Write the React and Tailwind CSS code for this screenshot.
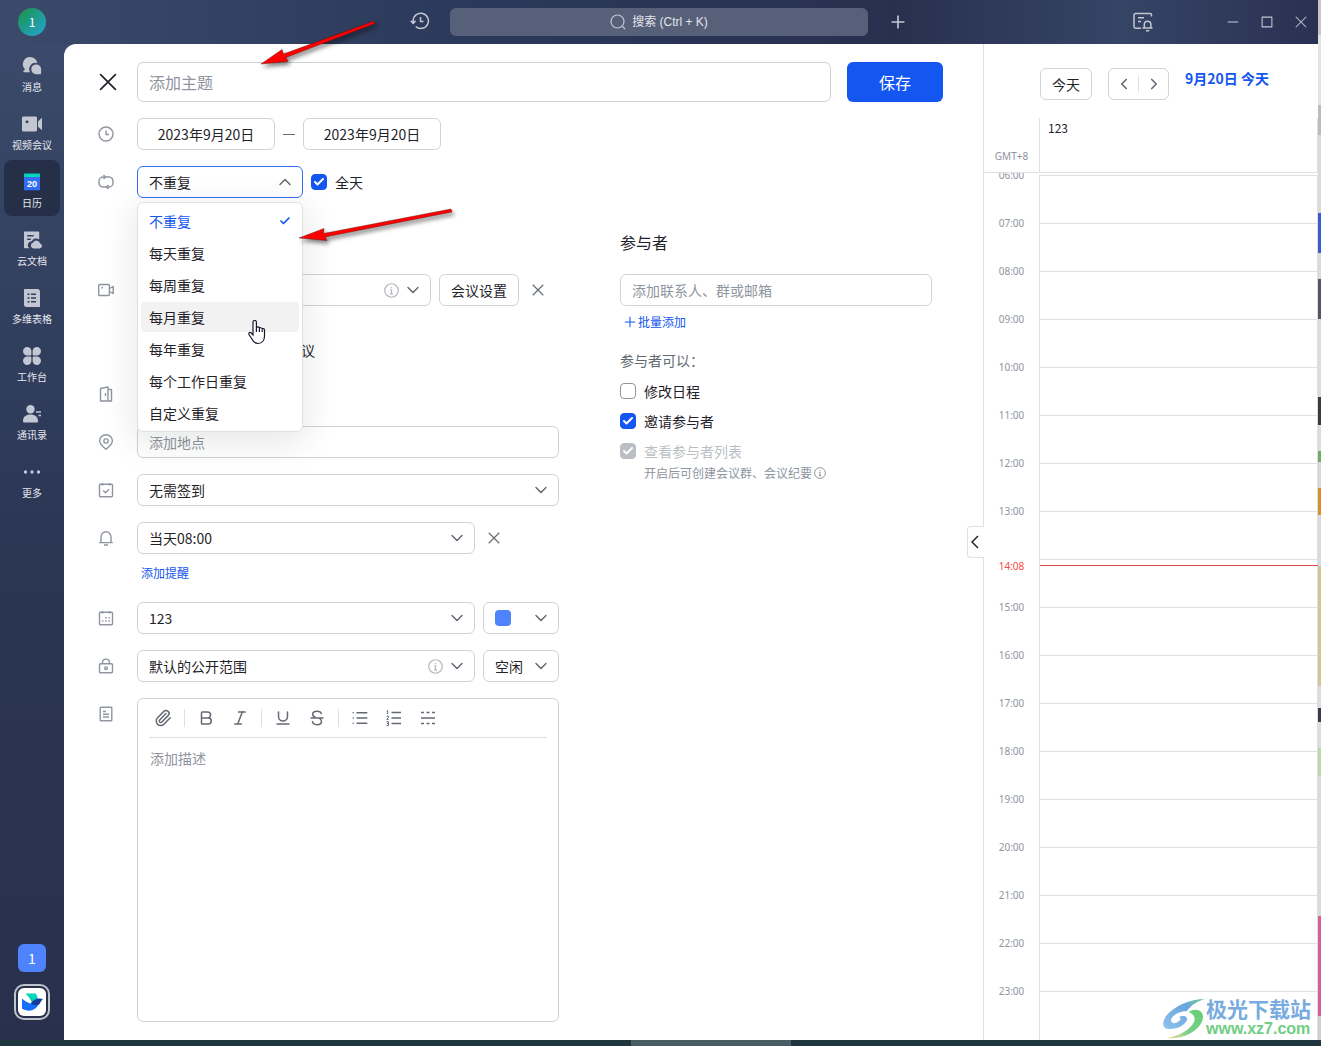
import { Bold, Check, ChevronDown, ChevronLeft, ChevronRight, ChevronUp, Italic, List, Paperclip, Plus, Underline } from 'lucide-react';

const REPEAT_OPTIONS = ['不重复', '每天重复', '每周重复', '每月重复', '每年重复', '每个工作日重复', '自定义重复'];
const HOURS = ['06:00', '07:00', '08:00', '09:00', '10:00', '11:00', '12:00', '13:00', '14:00', '15:00', '16:00', '17:00', '18:00', '19:00', '20:00', '21:00', '22:00', '23:00'];

// Sliver of the desktop that shows beside the window
const DESKTOP_STRIPS = [
  'h-[35px] bg-[#c9c6ca]',
  'h-[70px] bg-[#e4e4e4]',
  'h-[30px] bg-[#bcbcbe]',
  'h-[78px] bg-[#dadadb]',
  'h-[40px] bg-[#3d5bcc]',
  'h-[26px] bg-[#dadadb]',
  'h-[40px] bg-[#54565f]',
  'h-[78px] bg-[#dcdcdc]',
  'h-[28px] bg-[#3a3a3a]',
  'h-[26px] bg-[#dcdcdc]',
  'h-[11px] bg-[#6fae5e]',
  'h-[26px] bg-[#d8d8d8]',
  'h-[27px] bg-[#d98f2e]',
  'h-[51px] bg-[#dadadb]',
  'h-[120px] bg-[#cfc79c]',
  'h-[22px] bg-[#dcdcdc]',
  'h-[14px] bg-[#3a3a4a]',
  'h-[26px] bg-[#dcdcdc]',
  'h-[28px] bg-[#bcd6b0]',
  'h-[140px] bg-[#dadadb]',
  'h-[100px] bg-[#d95f92]',
];

/* ── Icons ── */

function Line({ size = 16, box = 16, width = 1.4, className = '', children }) {
  return (
    <svg
      width={size}
      height={size}
      viewBox={`0 0 ${box} ${box}`}
      fill="none"
      stroke="currentColor"
      strokeWidth={width}
      strokeLinejoin="round"
      className={`shrink-0 ${className}`}
      aria-hidden="true"
    >
      {children}
    </svg>
  );
}

function Cross({ size, width }) {
  return (
    <Line size={size} width={width}>
      <path d="M1 1l14 14M15 1L1 15" />
    </Line>
  );
}

function InfoIcon({ size = 15 }) {
  return (
    <Line size={size} width={1.3}>
      <circle cx="8" cy="8" r="7.2" />
      <path d="M8 4.2v1.4M6.6 7.2H8v4M6.3 11.5h3.4" />
    </Line>
  );
}

const ClockIcon = () => (
  <Line>
    <circle cx="8" cy="8" r="7" />
    <path d="M8 4.6v3.9h3" />
  </Line>
);

const RepeatIcon = () => (
  <Line>
    <path d="M7.5 3H5a4 4 0 0 0-4 4v2a4 4 0 0 0 2.800 3.800M8.500 13H11a4 4 0 0 0 4-4V7a4 4 0 0 0-2.800-3.800" />
    <path d="M5.500 1l2 2-2 2M7.500 3h3.500a4 4 0 0 1 1.200.2M10.500 15l-2-2 2-2M8.500 13H5a4 4 0 0 1-1.200-.2" />
  </Line>
);

const VideoIcon = () => (
  <Line>
    <rect x=".7" y="2.5" width="10.7" height="11" rx="1" />
    <path d="M11.4 6.5l3.8-2v7l-3.8-2" />
    <path d="M3.400 5.600H5" strokeWidth="1.6" />
  </Line>
);

const RoomIcon = () => (
  <Line>
    <path d="M2.5 2.500L10 1v14H2.500zM10 3.500h3.500V15H10M7.500 7v3" />
  </Line>
);

const PinIcon = () => (
  <Line>
    <path d="M8 15.300C4 12 1.600 9.700 1.600 6.900a6.400 6.200 0 0 1 12.800 0C14.400 9.700 12 12 8 15.300z" />
    <rect x="5.9" y="4.9" width="4.2" height="4.2" rx="1.8" />
  </Line>
);

const SignInIcon = () => (
  <Line>
    <rect x="1.5" y="2.2" width="13" height="12.5" rx="1" />
    <path d="M4.500 1v2.400M11.500 1v2.400M5.200 8.500l2.300 2.200 3.600-3.500" />
  </Line>
);

const BellIcon = () => (
  <Line>
    <path d="M3 12.500V7a5 5.200 0 0 1 10 0v5.500M1.200 12.600h13.600M6 15h4" />
  </Line>
);

const CalendarIcon = () => (
  <Line>
    <rect x="1.5" y="2.2" width="13" height="12.5" rx="1" />
    <path d="M4.500 1v2.400M11.500 1v2.400" />
    <path d="M7.300 7.800h1.400M10.600 7.800H12M4 11h1.400M7.300 11h1.400M10.600 11H12" strokeWidth="1.6" />
  </Line>
);

const LockIcon = () => (
  <Line>
    <rect x="1.5" y="5.7" width="13" height="9" rx="1" />
    <path d="M4.600 5.700V4.500a3.400 3.400 0 0 1 6.800 0v1.200" />
    <circle cx="8" cy="10.2" r="1.3" />
  </Line>
);

const NoteIcon = () => (
  <Line>
    <rect x="2.2" y="1.2" width="11.6" height="13.6" rx=".6" />
    <path d="M5 5.500h3M5 8.200h6M5 11h6" />
  </Line>
);

const StrikeIcon = () => (
  <Line size={18} box={18} width={1.5}>
    <path d="M13.500 5.200C13 3 11.200 2.300 9 2.300c-2.300 0-4.300 1-4.300 3 0 1.500 1.200 2.500 2.600 3M2.500 9h13M4.400 12c.2 2.500 2.100 3.700 4.600 3.700s4.500-1 4.500-3.200c0-1.400-.8-2.500-2-3.200" />
  </Line>
);

const OrderedIcon = () => (
  <Line size={18} box={18} width={1.5}>
    <path d="M6.500 3.500h9.500M6.500 9h9.500M6.500 14.500h9.500" />
    <path d="M1.700 2.200l1-.6v3.600M1.500 7.300h2v1.300l-1.800 1.700h2M1.500 12.700h2v3.800h-2M2 14.500h1.500" strokeWidth="1" />
  </Line>
);

const DividerIcon = () => (
  <Line size={18} box={18} width={1.5}>
    <path d="M2 3.500h3M7.500 3.500h3M13 3.500h3M2 9h14M2 14.500h3M7.500 14.500h3M13 14.500h3" />
  </Line>
);

function Solid({ children }) {
  return (
    <svg width="20" height="20" viewBox="0 0 20 20" fill="#c3c7d2" aria-hidden="true">
      {children}
    </svg>
  );
}

const NAV_ITEMS = [
  {
    label: '消息',
    icon: (
      <Solid>
        <path d="M8.200 1a7.200 7.200 0 0 1 7.100 6.200A6.200 6.200 0 0 0 8 16.200H1.800c-.6 0-.8-.6-.4-1l1.600-1.900A7.200 7.200 0 0 1 8.200 1z" />
        <path d="M14.200 8.400a4.900 4.900 0 0 1 4.900 4.900v4.100c0 .5-.3.800-.8.800h-4.100a4.900 4.900 0 0 1 0-9.800z" />
      </Solid>
    ),
  },
  {
    label: '视频会议',
    icon: (
      <Solid>
        <path
          fillRule="evenodd"
          d="M1.500 2.500h12c.8 0 1.500.7 1.500 1.500v12c0 .8-.7 1.500-1.500 1.500h-12C.7 17.500 0 16.800 0 16V4c0-.8.7-1.500 1.500-1.500zM5 6.200a1.500 1.500 0 1 0 0 3 1.500 1.500 0 0 0 0-3z"
        />
        <path d="M16 7.500l3-3c.5-.4 1-.2 1 .4v10.200c0 .6-.5.8-1 .4l-3-3z" />
      </Solid>
    ),
  },
  {
    label: '日历',
    active: true,
    icon: (
      <svg width="20" height="20" viewBox="0 0 20 20" aria-hidden="true">
        <path d="M2 5h16v12.500c0 .5-.3.800-.8.800H2.800c-.5 0-.8-.3-.8-.8z" fill="#336df4" />
        <path d="M2.800 1.500h14.400c.5 0 .8.300.8.800V5H2V2.300c0-.5.3-.8.800-.8z" fill="#00d6b9" />
        <text x="10" y="14.5" fontSize="9" fontWeight="700" textAnchor="middle" fill="#fff" fontFamily="Liberation Sans, sans-serif">
          20
        </text>
      </svg>
    ),
  },
  {
    label: '云文档',
    icon: (
      <Solid>
        <path
          fillRule="evenodd"
          d="M3 1.500h13.200c.6 0 1 .4 1 1v7a5 5 0 0 0-7.600 1.700 3.800 3.800 0 0 0-2 7H3c-.6 0-1-.4-1-1V2.500c0-.6.4-1 1-1zM5.200 5v1.600h6.500V5zm0 3.400V10h3.600V8.400z"
        />
        <path d="M11.500 18.500a3 3 0 0 1-.3-5.900 3.700 3.700 0 0 1 6.900 1 2.500 2.500 0 0 1-.4 4.900z" />
      </Solid>
    ),
  },
  {
    label: '多维表格',
    icon: (
      <Solid>
        <path d="M2 2c0-.6.400-1 1-1h12.500c1.400 0 2.500 1.100 2.500 2.500V18c0 .6-.4 1-1 1H4.500A2.500 2.500 0 0 1 2 16.500z" />
        <path d="M5.500 6.300h2M9 6.300h5M5.500 10h2M9 10h5M5.500 13.700h2M9 13.700h5" stroke="#323e5e" strokeWidth="1.6" />
      </Solid>
    ),
  },
  {
    label: '工作台',
    icon: (
      <Solid>
        <path d="M5.200 1a4.200 4.200 0 0 1 4.200 4.200v2.900c0 .8-.5 1.300-1.300 1.300H5.200a4.200 4.200 0 0 1 0-8.400zM14.800 1a4.200 4.200 0 0 0-4.200 4.200v2.900c0 .8.500 1.300 1.300 1.300h2.900a4.200 4.200 0 0 0 0-8.400zM5.200 19a4.200 4.200 0 0 0 4.200-4.200v-2.900c0-.8-.5-1.300-1.300-1.300H5.200a4.200 4.200 0 0 0 0 8.400zM14.800 19a4.200 4.200 0 0 1-4.200-4.200v-2.900c0-.8.500-1.300 1.300-1.300h2.900a4.200 4.200 0 0 1 0 8.400z" />
      </Solid>
    ),
  },
  {
    label: '通讯录',
    icon: (
      <Solid>
        <circle cx="8.5" cy="5.2" r="4.2" />
        <path d="M8.500 10.600c4.500 0 7.500 2.400 7.500 6.400 0 .9-.5 1.600-1.500 1.600H2.500C1.500 18.600 1 17.900 1 17c0-4 3-6.400 7.500-6.400zM14 7.200h5v1.500h-5zM16.500 10.800H19v1.500h-2.500z" />
      </Solid>
    ),
  },
  {
    label: '更多',
    icon: (
      <Solid>
        <circle cx="3.5" cy="10" r="1.7" />
        <circle cx="10" cy="10" r="1.7" />
        <circle cx="16.5" cy="10" r="1.7" />
      </Solid>
    ),
  },
];

/* ── Form controls ── */

function SelectBox({ label, value, open = false, info = false, swatch = false, className = '' }) {
  return (
    <div className={`relative ${className}`}>
      <select
        aria-label={label}
        className={`w-full h-8 pl-[11px] pr-8 rounded-md border bg-white text-sm appearance-none outline-none ${
          open ? 'border-[#336df4]' : 'border-[#d0d3d6]'
        }`}
      >
        <option>{value}</option>
      </select>
      <span className="absolute inset-y-0 right-2 flex items-center gap-1 text-[#646a73] pointer-events-none">
        {info && (
          <span className="text-[#b4b8be]">
            <InfoIcon />
          </span>
        )}
        {open ? <ChevronUp size={20} strokeWidth={1.8} /> : <ChevronDown size={20} strokeWidth={1.8} />}
      </span>
      {swatch && <span className="absolute top-2 left-3 w-4 h-4 rounded bg-[#4e83fd] pointer-events-none" />}
    </div>
  );
}

function CheckItem({ id, label, checked = false, disabled = false }) {
  const box = disabled
    ? 'bg-[#bbbfc4] border-[#bbbfc4]'
    : checked
    ? 'bg-[#1456f0] border-[#1456f0]'
    : 'bg-white border-[#8f959e]';
  return (
    <div className="flex items-center gap-2 h-5">
      <span className="relative flex">
        <input
          id={id}
          type="checkbox"
          defaultChecked={checked}
          disabled={disabled}
          className={`w-4 h-4 rounded border appearance-none ${box}`}
        />
        {checked && (
          <Check size={12} strokeWidth={4} className="absolute top-0.5 left-0.5 text-white pointer-events-none" />
        )}
      </span>
      <label htmlFor={id} className={disabled ? 'text-[#bbbfc4]' : ''}>
        {label}
      </label>
    </div>
  );
}

function FormRow({ icon, className = '', children }) {
  return (
    <div className={`flex ${className}`}>
      <span className="w-[73px] h-8 pl-[34px] shrink-0 flex items-center text-[#8f959e]">{icon}</span>
      <div className="flex-1 min-w-0">{children}</div>
    </div>
  );
}

function DateInput({ label }) {
  return (
    <input
      type="text"
      aria-label={label}
      defaultValue="2023年9月20日"
      className="w-[138px] h-8 rounded-md border border-[#d0d3d6] text-center outline-none"
    />
  );
}

function ToolButton({ label, children }) {
  return (
    <button type="button" aria-label={label} className="w-[34px] h-6 flex items-center justify-center">
      {children}
    </button>
  );
}

function RepeatMenu() {
  return (
    <ul
      role="listbox"
      aria-label="重复"
      className="absolute z-10 top-full left-0 mt-1 w-[166px] flex flex-col gap-[2px] p-[3px] bg-white border border-[#dee0e3] rounded-md shadow-[0_8px_32px_4px_rgba(31,35,41,0.10)]"
    >
      {REPEAT_OPTIONS.map((option, i) => (
        <li
          key={option}
          role="option"
          aria-selected={i === 0}
          className={`h-[30px] px-2 rounded flex items-center justify-between ${i === 0 ? 'text-[#1456f0]' : ''} ${
            i === 3 ? 'bg-[#f2f2f3]' : ''
          }`}
        >
          {option}
          {i === 0 && <Check size={12} strokeWidth={3.5} />}
        </li>
      ))}
    </ul>
  );
}

/* ── Page sections ── */

function TopBar() {
  return (
    <header className="h-11 grid grid-cols-[1fr_418px_1fr] items-center text-[#c3c7d2] bg-[linear-gradient(to_right,#3b4a6b,#2b395a_35%,#28304f_68%,#364465_85%,#2a3153)]">
      <div className="flex items-center justify-between pl-[18px] pr-5">
        <span className="w-7 h-7 rounded-full flex items-center justify-center text-xs text-white bg-linear-to-br from-[#22903a] to-[#2aa3d8]">
          1
        </span>
        <button type="button" aria-label="历史记录">
          <Line size={20} box={20} width={1.5}>
            <path d="M3.200 12.500V9.500a7.600 7.600 0 1 1 2.500 6M.8 9.800l2.400 2.600 2.300-2.600M10.500 6v4.500h3" transform="translate(0 -1)" />
          </Line>
        </button>
      </div>
      <button
        type="button"
        className="h-7 rounded-md bg-[#566079] flex items-center justify-center gap-1.5 text-xs text-[#e3e5ea] font-['Liberation_Sans','Noto_Sans_CJK_SC',sans-serif]"
      >
        <Line size={16} width={1.2} className="text-[#c3c7d2]">
          <circle cx="7.5" cy="7.5" r="6.5" />
          <path d="M12.200 12.200l2.800 2.800" />
        </Line>
        搜索 (Ctrl + K)
      </button>
      <div className="flex items-center pl-5 pr-[11px]">
        <button type="button" aria-label="新建">
          <Plus size={20} strokeWidth={2} />
        </button>
        <button type="button" aria-label="通知" className="ml-auto mr-[74px]">
          <Line size={20} box={20} width={1.5}>
            <path d="M18.500 4.500V3c0-.8-.6-1.400-1.400-1.400H2.400C1.600 1.600 1 2.200 1 3v11.800c0 .8.600 1.400 1.400 1.400H8M5 5.800h6M5 9.500h3" />
            <path d="M11.300 15.800v-3.300a3.300 3.300 0 0 1 6.600 0v3.300M9.500 16h10M13 18.700h3.200" />
          </Line>
        </button>
        <div className="flex gap-[22px]">
          <button type="button" aria-label="最小化">
            <Line size={12}>
              <path d="M1 8h14" />
            </Line>
          </button>
          <button type="button" aria-label="最大化">
            <Line size={12}>
              <path d="M1.500 1.500h13v13h-13z" />
            </Line>
          </button>
          <button type="button" aria-label="关闭">
            <Cross size={12} width={1.4} />
          </button>
        </div>
      </div>
    </header>
  );
}

function Sidebar() {
  return (
    <aside className="w-16 shrink-0 flex flex-col justify-between pb-5 bg-linear-to-b from-[#3b4a6a] via-[#2b3655] via-50% to-[#28304d]">
      <nav className="flex flex-col gap-[2px] px-1">
        {NAV_ITEMS.map((item) => (
          <a
            key={item.label}
            href="#"
            className={`h-14 pt-3 rounded-lg flex flex-col items-center gap-1 text-[10px] leading-[14px] text-[#e6e8ee] ${
              item.active ? 'bg-[#252f48]' : ''
            }`}
          >
            {item.icon}
            {item.label}
          </a>
        ))}
      </nav>
      <div className="flex flex-col items-center gap-3 text-white">
        <span className="w-7 h-7 rounded-md flex items-center justify-center bg-[#4e83fd]">1</span>
        <button
          type="button"
          aria-label="飞书"
          className="w-9 h-9 rounded-[10px] border-2 border-[#bfc3cc] flex items-center justify-center"
        >
          <svg width="28" height="28" viewBox="0 0 28 28" aria-hidden="true">
            <rect width="28" height="28" rx="6" fill="#fff" />
            <path d="M7.500 5.500h10c1.200 1.400 2 3 2.300 4.900-2 .7-3.800 2.600-5.600 4.600C12.700 11.500 10.500 8.200 7.500 5.500z" fill="#00d6b9" />
            <path d="M4 10.500c3.500 3.300 8 5.600 12.400 5.600 2 0 4-.6 5.400-2-1.900 5.400-5.700 8.600-10.700 8.600-2.700 0-5.300-.7-7.100-2.100z" fill="#146fff" />
            <path d="M12.500 15.500c2.700-3.400 5.500-5 8.800-5 1.300 0 2.600.2 3.700.6-1.500 1.200-2.100 2.600-3 4.100-2.200 3-6.300 2.100-9.500.3z" fill="#133c9a" />
          </svg>
        </button>
      </div>
    </aside>
  );
}

function EventForm() {
  return (
    <div className="flex flex-col">
      <FormRow icon={<ClockIcon />} className="mb-4">
        <div className="flex items-center">
          <DateInput label="开始日期" />
          <span className="w-3 h-px mx-2 bg-[#646a73]" />
          <DateInput label="结束日期" />
        </div>
      </FormRow>
      <FormRow icon={<RepeatIcon />} className="mb-[76px]">
        <div className="flex items-center gap-2">
          <div className="relative">
            <SelectBox label="重复" value="不重复" open className="w-[166px]" />
            <RepeatMenu />
          </div>
          <CheckItem id="all-day" label="全天" checked />
        </div>
      </FormRow>
      <FormRow icon={<VideoIcon />} className="mb-4">
        <div className="flex items-center gap-2">
          <SelectBox label="视频会议" value="" info className="flex-1" />
          <button type="button" className="w-20 h-8 rounded-md border border-[#d0d3d6]">
            会议设置
          </button>
          <button type="button" aria-label="移除视频会议" className="w-8 h-8 pl-[5px] flex items-center text-[#646a73]">
            <Cross size={12} width={1.6} />
          </button>
        </div>
        <p className="h-14 pl-[164px] pb-0.5 flex items-end leading-5">议</p>
      </FormRow>
      <FormRow icon={<RoomIcon />} className="mb-4" />
      <FormRow icon={<PinIcon />} className="mb-4">
        <input
          type="text"
          aria-label="地点"
          placeholder="添加地点"
          className="w-full h-8 px-[11px] rounded-md border border-[#d0d3d6] placeholder:text-[#8f959e] outline-none"
        />
      </FormRow>
      <FormRow icon={<SignInIcon />} className="mb-4">
        <SelectBox label="签到" value="无需签到" />
      </FormRow>
      <FormRow icon={<BellIcon />} className="mb-4">
        <div className="flex items-center gap-2">
          <SelectBox label="提醒" value="当天08:00" className="flex-1" />
          <button type="button" aria-label="移除提醒" className="w-[76px] h-8 pl-[5px] flex items-center text-[#646a73]">
            <Cross size={12} width={1.6} />
          </button>
        </div>
        <a href="#" className="block mt-2 mb-0.5 pl-1 h-[22px] text-xs leading-[22px] text-[#1456f0]">
          添加提醒
        </a>
      </FormRow>
      <FormRow icon={<CalendarIcon />} className="mb-4">
        <div className="flex gap-2">
          <SelectBox label="日历" value="123" className="flex-1" />
          <SelectBox label="颜色" value="" swatch className="w-[76px]" />
        </div>
      </FormRow>
      <FormRow icon={<LockIcon />} className="mb-4">
        <div className="flex gap-2">
          <SelectBox label="公开范围" value="默认的公开范围" info className="flex-1" />
          <SelectBox label="忙闲状态" value="空闲" className="w-[76px]" />
        </div>
      </FormRow>
      <FormRow icon={<NoteIcon />} className="flex-1">
        <div className="h-full min-h-[324px] flex flex-col rounded-md border border-[#d0d3d6]">
          <div className="h-[38px] pl-2 flex items-center text-[#646a73]">
            <ToolButton label="附件"><Paperclip size={18} /></ToolButton>
            <span className="w-px h-[18px] mx-1 bg-[#dee0e3]" />
            <ToolButton label="加粗"><Bold size={18} /></ToolButton>
            <ToolButton label="斜体"><Italic size={18} /></ToolButton>
            <span className="w-px h-[18px] mx-1 bg-[#dee0e3]" />
            <ToolButton label="下划线"><Underline size={18} /></ToolButton>
            <ToolButton label="删除线"><StrikeIcon /></ToolButton>
            <span className="w-px h-[18px] mx-1 bg-[#dee0e3]" />
            <ToolButton label="无序列表"><List size={18} /></ToolButton>
            <ToolButton label="有序列表"><OrderedIcon /></ToolButton>
            <ToolButton label="分割线"><DividerIcon /></ToolButton>
          </div>
          <div className="mx-[11px] h-px bg-[#dee0e3]" />
          <textarea
            aria-label="描述"
            placeholder="添加描述"
            className="flex-1 px-3 py-2 leading-6 resize-none outline-none placeholder:text-[#8f959e]"
          />
        </div>
      </FormRow>
    </div>
  );
}

function Participants() {
  return (
    <section className="w-[312px] shrink-0 pt-28">
      <h2 className="text-base leading-6">参与者</h2>
      <input
        type="text"
        aria-label="参与者"
        placeholder="添加联系人、群或邮箱"
        className="mt-5 w-full h-8 px-[11px] rounded-md border border-[#d0d3d6] placeholder:text-[#8f959e] outline-none"
      />
      <button type="button" className="mt-1.5 pl-1 h-5 flex items-center gap-0.5 text-xs text-[#1456f0]">
        <Line size={12}>
          <path d="M8 1v14M1 8h14" />
        </Line>
        批量添加
      </button>
      <p className="mt-[18px] leading-5 text-[#646a73]">参与者可以：</p>
      <div className="mt-[11px] flex flex-col gap-2.5">
        <CheckItem id="can-edit" label="修改日程" />
        <CheckItem id="can-invite" label="邀请参与者" checked />
        <CheckItem id="can-view" label="查看参与者列表" checked disabled />
      </div>
      <p className="mt-0.5 pl-6 flex items-center gap-0.5 text-xs leading-5 text-[#8f959e]">
        开启后可创建会议群、会议纪要
        <InfoIcon size={12} />
      </p>
    </section>
  );
}

function DayPanel() {
  return (
    <aside className="relative w-[335px] shrink-0 flex flex-col border-l border-[#dee0e3]">
      <button
        type="button"
        aria-label="收起"
        className="absolute top-1/2 -left-[17px] -translate-y-1/2 w-[17px] h-8 pr-0.5 rounded-l border border-r-0 border-[#dee0e3] bg-white flex items-center justify-center"
      >
        <svg width="8" height="14" viewBox="0 0 8 14" fill="none" stroke="#1f2329" strokeWidth="1.5" aria-hidden="true">
          <path d="M7 1L1 7l6 6" />
        </svg>
      </button>
      <div className="h-[74px] pt-6 pl-14 flex items-start gap-4">
        <button type="button" className="w-[52px] h-8 rounded-md border border-[#d0d3d6]">
          今天
        </button>
        <div className="w-[61px] h-8 flex items-center rounded-md border border-[#d0d3d6] text-[#646a73]">
          <button type="button" aria-label="前一天" className="flex-1 flex justify-center">
            <ChevronLeft size={18} strokeWidth={2.2} />
          </button>
          <span className="w-px h-[18px] bg-[#dee0e3]" />
          <button type="button" aria-label="后一天" className="flex-1 flex justify-center">
            <ChevronRight size={18} strokeWidth={2.2} />
          </button>
        </div>
        <h2 className="leading-5 font-bold text-[#1456f0]">9月20日 今天</h2>
      </div>
      <div className="h-[55px] flex border-b border-[#dee0e3]">
        <span className="w-[55px] pb-1.5 flex items-end justify-center text-[10px] leading-5 text-[#8f959e] font-['Noto_Sans',sans-serif]">
          GMT+8
        </span>
        <span className="flex-1 pl-2 text-xs leading-5 border-x border-[#dee0e3]">123</span>
      </div>
      <div className="flex-1 pt-[2px] overflow-hidden flex flex-col text-[10px] text-[#8f959e] font-['Noto_Sans',sans-serif]">
        {HOURS.map((hour) => {
          const isNow = hour === '14:00';
          return (
            <div key={hour} className="relative h-12 last:flex-1 flex">
              <span
                className={`w-[55px] flex items-center justify-center ${isNow ? 'h-3.5 text-[#f54a45]' : 'h-0'}`}
              >
                {isNow ? '14:08' : hour}
              </span>
              <span className="flex-1 border-t border-x border-[#dee0e3]" />
              {isNow && <span className="absolute top-1.5 left-14 right-0 h-px bg-[#e54545]" />}
            </div>
          );
        })}
      </div>
    </aside>
  );
}

/* ── Overlays ── */

function Arrows() {
  return (
    <svg
      width="480"
      height="260"
      viewBox="0 0 480 260"
      className="absolute z-20 top-0 left-0 pointer-events-none drop-shadow-[2px_3px_2px_rgba(0,0,0,0.5)]"
      aria-hidden="true"
    >
      <g stroke="#4a1010" strokeWidth=".4" fill="#fe0000">
        <path d="M261 64L282 49.500l1.500 4.500L374 21l1 2.500L286 57.500l2 4z" />
        <path d="M299 238l25-9.500-.5 5L451 209l1 3L325 237l2 3.500z" />
      </g>
    </svg>
  );
}

function HandCursor() {
  return (
    <svg
      width="18"
      height="25"
      viewBox="0 0 18 25"
      className="absolute z-20 top-[320px] left-[248px] pointer-events-none"
      aria-hidden="true"
    >
      <path
        d="M5 15V2.200a1.700 1.700 0 0 1 3.400 0V8c.2-1.500 2.800-1.500 3 .3.300-1 2.600-.8 2.800.8.300-.9 2.300-.6 2.300 1V16c0 4-2.200 7.500-6.500 7.500-3.500 0-4.800-1.900-5.900-4.300L1 14.500c-.8-1.600 1-2.700 2.100-1.700zM8.400 8v4M11.400 8.500V12M14.200 9.500V12"
        fill="#fff"
        stroke="#16162a"
        strokeWidth="1.2"
      />
    </svg>
  );
}

function Watermark() {
  return (
    <div className="absolute z-20 bottom-1.5 right-2.5 flex items-center pointer-events-none">
      <svg width="44" height="42" viewBox="0 0 44 42" aria-hidden="true">
        <defs>
          <linearGradient id="wm-a" x1="1" y1="0" x2="0" y2="1">
            <stop offset="0" stopColor="#6fcf8f" />
            <stop offset=".35" stopColor="#6aa5e0" />
            <stop offset="1" stopColor="#8fc3ee" />
          </linearGradient>
          <linearGradient id="wm-b" x1="1" y1="0" x2="0" y2="1">
            <stop offset="0" stopColor="#62cf74" />
            <stop offset=".6" stopColor="#7ccf88" />
            <stop offset="1" stopColor="#f3dc9a" />
          </linearGradient>
        </defs>
        <path
          d="M43 1C28 1 12 8 4 18c-5 8-3 13 4 13 8 0 15-4 17-9 1-4-4-5-8-3 2 1 2 3 0 4-3 3-8 3-8-1 1-5 9-9 16-9C29 7 36 3 43 1z"
          fill="url(#wm-a)"
        />
        <path d="M27 14c4-3 10-3 13 1 3 5-1 13-8 18-7 5-16 8-27 7 12-2 23-8 27-16 2-5-1-8-5-10z" fill="url(#wm-b)" />
      </svg>
      <div className="font-bold">
        <p className="text-[21px] leading-5 text-[#78acdf]">极光下载站</p>
        <p className="text-base leading-[22px] text-[#6fce83] font-['Liberation_Sans',sans-serif]">www.xz7.com</p>
      </div>
    </div>
  );
}

export default function App() {
  return (
    <div className="relative min-h-screen flex flex-col text-sm text-[#1f2329] font-['Noto_Sans_CJK_SC',sans-serif]">
      <div className="flex-1 flex">
        <div className="flex-1 min-w-0 flex flex-col bg-[#3b4a6a]">
          <TopBar />
          <div className="flex-1 flex">
            <Sidebar />
            <main className="flex-1 flex bg-white rounded-tl-xl">
              <form className="flex-1 pb-[18px] flex flex-col">
                <div className="pt-[18px] pb-4 pr-10 flex items-center gap-4">
                  <button type="button" aria-label="关闭" className="w-[57px] pl-[35px] h-10 flex items-center">
                    <Cross size={18} width={1.5} />
                  </button>
                  <input
                    type="text"
                    aria-label="主题"
                    placeholder="添加主题"
                    className="flex-1 h-10 px-[11px] rounded-md border border-[#d0d3d6] text-base placeholder:text-[#8f959e] outline-none"
                  />
                  <button type="submit" className="w-24 h-10 rounded-md bg-[#1456f0] text-base text-white">
                    保存
                  </button>
                </div>
                <div className="flex-1 pr-[51px] grid grid-cols-[1fr_312px] gap-[61px]">
                  <EventForm />
                  <Participants />
                </div>
              </form>
              <DayPanel />
            </main>
          </div>
        </div>
        <div className="w-[3px] flex flex-col bg-[#cfcfd2]">
          {DESKTOP_STRIPS.map((strip, i) => (
            <span key={i} className={strip} />
          ))}
        </div>
      </div>
      <footer className="h-1.5 flex justify-center bg-[#20363f]">
        <span className="w-40 ml-[100px] bg-[#4a5c64]" />
      </footer>
      <Arrows />
      <HandCursor />
      <Watermark />
    </div>
  );
}
